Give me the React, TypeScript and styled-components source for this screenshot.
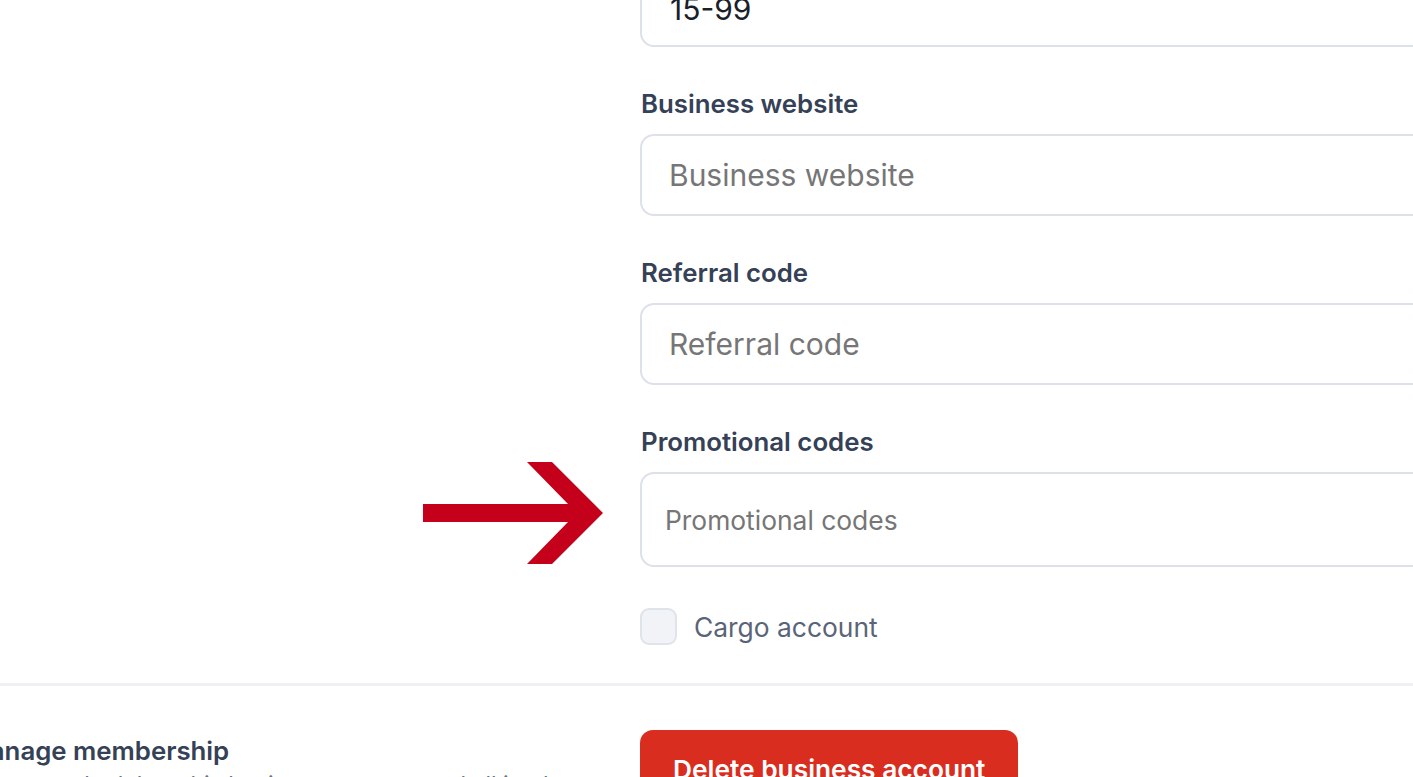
import React from "react";
import styled, { createGlobalStyle } from "styled-components";

const Global = createGlobalStyle`
  html, body { margin: 0; padding: 0; background: #ffffff; }
  body { font-family: Inter, "Noto Sans", "Liberation Sans", sans-serif; overflow: hidden; }
  * { box-sizing: border-box; }
`;

const Page = styled.div`
  position: relative;
  width: 1413px;
  height: 777px;
  overflow: hidden;
`;

const Section = styled.section<{ $pad: number }>`
  display: grid;
  grid-template-columns: 640px 1000px;
  padding-top: ${(p) => p.$pad}px;
`;

const FormCol = styled.div`
  display: flex;
  flex-direction: column;
  margin-top: -35px;
`;

const Field = styled.div`
  display: flex;
  flex-direction: column;
  margin-bottom: 41px;
`;

const Label = styled.label`
  font-size: 25.8px;
  line-height: 32px;
  font-weight: 600;
  color: #354156;
  margin-bottom: 14px;
  padding-left: 1px;
`;

const Input = styled.input<{ $h: number; $fs: number; $pl: number; $pt?: number }>`
  width: 100%;
  height: ${(p) => p.$h}px;
  border: 2px solid #dde1e9;
  border-radius: 14px;
  padding: ${(p) => p.$pt ?? 0}px 0 0 ${(p) => p.$pl}px;
  font-family: Inter, "Noto Sans", sans-serif;
  font-size: ${(p) => p.$fs}px;
  color: #1b1f29;
  background: #ffffff;
  outline: none;
  &::placeholder { color: #767676; }
`;

const CheckRow = styled.label`
  display: flex;
  align-items: center;
  gap: 17px;
  padding-bottom: 38px;
`;

const CheckBox = styled.span`
  width: 37px;
  height: 37px;
  border-radius: 9px;
  border: 2px solid #dfe3ea;
  background: #f1f3f7;
  flex-shrink: 0;
`;

const CheckText = styled.span`
  font-size: 26.4px;
  line-height: 32px;
  color: #5a6478;
`;

const Divider = styled.hr`
  margin: 0;
  border: none;
  height: 3px;
  background: #eef0f3;
`;

const SideCol = styled.div`
  display: flex;
  flex-direction: column;
  padding-top: 5px;
`;

const SideTitle = styled.h3`
  margin: 0 0 0 -34px;
  font-size: 25.8px;
  line-height: 32px;
  font-weight: 600;
  color: #354156;
`;

const SideText = styled.p`
  margin: 3px 0 0 -34px;
  font-size: 23px;
  line-height: 30px;
  color: #6b7280;
`;

const ActionCol = styled.div`
  display: flex;
  align-items: flex-start;
`;

const DangerButton = styled.button`
  height: 78px;
  padding: 0 33px;
  border: none;
  border-radius: 13px;
  background: #d92d20;
  color: #ffffff;
  font-family: Inter, "Noto Sans", sans-serif;
  font-size: 26.3px;
  font-weight: 600;
`;

const Arrow = styled.svg`
  position: absolute;
  left: 423px;
  top: 462px;
`;

export default function App() {
  return (
    <Page>
      <Global />
      <Section $pad={0}>
        <div />
        <FormCol>
          <Field>
            <Input $h={82} $fs={30} $pl={28} $pt={6} defaultValue="15-99" readOnly />
          </Field>
          <Field>
            <Label>Business website</Label>
            <Input $h={82} $fs={30} $pl={27} placeholder="Business website" />
          </Field>
          <Field>
            <Label>Referral code</Label>
            <Input $h={82} $fs={30} $pl={27} placeholder="Referral code" />
          </Field>
          <Field>
            <Label>Promotional codes</Label>
            <Input $h={95} $fs={26.4} $pl={23} placeholder="Promotional codes" />
          </Field>
          <CheckRow>
            <CheckBox />
            <CheckText>Cargo account</CheckText>
          </CheckRow>
        </FormCol>
      </Section>
      <Divider />
      <Section $pad={44}>
        <SideCol>
          <SideTitle>Manage membership</SideTitle>
          <SideText>Permanently delete this business account and all its data</SideText>
        </SideCol>
        <ActionCol>
          <DangerButton>Delete business account</DangerButton>
        </ActionCol>
      </Section>
      <Arrow width="181" height="103" viewBox="0 0 181 103">
        <polygon
          points="0,42 145,42 104,0 129,0 180,51 129,102 104,102 145,60 0,60"
          fill="#c4001b"
        />
      </Arrow>
    </Page>
  );
}
